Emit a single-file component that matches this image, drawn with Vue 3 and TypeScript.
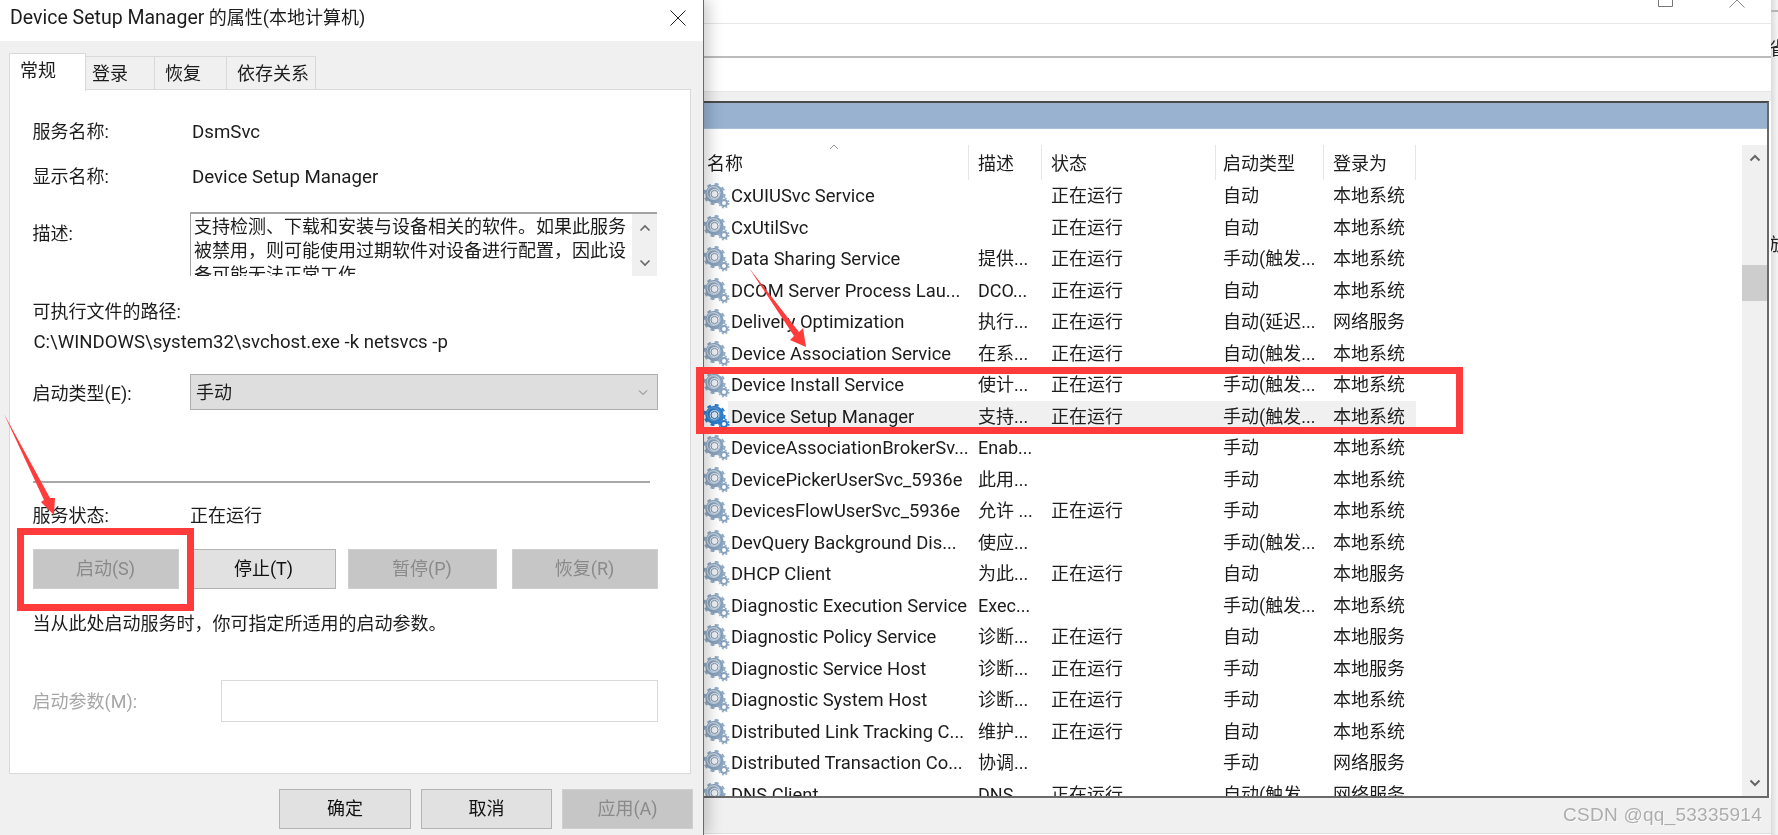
<script setup lang="ts">
interface Service {
  name: string
  desc: string
  state: string
  start: string
  logon: string
  selected?: boolean
}

const RUN = '正在运行'
const SYS = '本地系统'
const LOC = '本地服务'
const NET = '网络服务'

const services: Service[] = [
  { name: 'CxUIUSvc Service', desc: '', state: RUN, start: '自动', logon: SYS },
  { name: 'CxUtilSvc', desc: '', state: RUN, start: '自动', logon: SYS },
  { name: 'Data Sharing Service', desc: '提供...', state: RUN, start: '手动(触发...', logon: SYS },
  { name: 'DCOM Server Process Lau...', desc: 'DCO...', state: RUN, start: '自动', logon: SYS },
  { name: 'Delivery Optimization', desc: '执行...', state: RUN, start: '自动(延迟...', logon: NET },
  { name: 'Device Association Service', desc: '在系...', state: RUN, start: '自动(触发...', logon: SYS },
  { name: 'Device Install Service', desc: '使计...', state: RUN, start: '手动(触发...', logon: SYS },
  { name: 'Device Setup Manager', desc: '支持...', state: RUN, start: '手动(触发...', logon: SYS, selected: true },
  { name: 'DeviceAssociationBrokerSv...', desc: 'Enab...', state: '', start: '手动', logon: SYS },
  { name: 'DevicePickerUserSvc_5936e', desc: '此用...', state: '', start: '手动', logon: SYS },
  { name: 'DevicesFlowUserSvc_5936e', desc: '允许 ...', state: RUN, start: '手动', logon: SYS },
  { name: 'DevQuery Background Dis...', desc: '使应...', state: '', start: '手动(触发...', logon: SYS },
  { name: 'DHCP Client', desc: '为此...', state: RUN, start: '自动', logon: LOC },
  { name: 'Diagnostic Execution Service', desc: 'Exec...', state: '', start: '手动(触发...', logon: SYS },
  { name: 'Diagnostic Policy Service', desc: '诊断...', state: RUN, start: '自动', logon: LOC },
  { name: 'Diagnostic Service Host', desc: '诊断...', state: RUN, start: '手动', logon: LOC },
  { name: 'Diagnostic System Host', desc: '诊断...', state: RUN, start: '手动', logon: SYS },
  { name: 'Distributed Link Tracking C...', desc: '维护...', state: RUN, start: '自动', logon: SYS },
  { name: 'Distributed Transaction Co...', desc: '协调...', state: '', start: '手动', logon: NET },
  { name: 'DNS Client', desc: 'DNS...', state: RUN, start: '自动(触发...', logon: NET }
]

const tabs: string[] = ['登录', '恢复', '依存关系']
</script>

<template>
  <div class="stage">
    <section class="dialog">
      <header class="titlebar">
        <span><span class="title-latin">Device Setup Manager</span> 的属性(本地计算机)</span>
        <svg class="close" width="16" height="16" viewBox="0 0 16 16">
          <path d="M0.5 0.5 15.5 15.5M15.5 0.5 0.5 15.5" stroke="#222" fill="none" />
        </svg>
      </header>

      <nav class="tabs">
        <div class="tab active">常规</div>
        <div v-for="t in tabs" :key="t" class="tab" :class="'tab-' + t.length">{{ t }}</div>
      </nav>

      <div class="panel">
        <div class="row r1"><span class="label">服务名称:</span><span class="value latin">DsmSvc</span></div>
        <div class="row r2"><span class="label">显示名称:</span><span class="value latin">Device Setup Manager</span></div>
        <div class="row desc-row">
          <span class="label desc-label">描述:</span>
          <div class="descbox">
            <div class="desc-text">
              <div>支持检测、下载和安装与设备相关的软件。如果此服务</div>
              <div>被禁用，则可能使用过期软件对设备进行配置，因此设</div>
              <div>备可能无法正常工作。</div>
            </div>
            <div class="desc-scroll">
              <svg width="12" height="8" viewBox="0 0 12 8"><path d="M1.5 6.5 6 2l4.5 4.5" fill="none" stroke="#666" stroke-width="1.6" /></svg>
              <svg width="12" height="8" viewBox="0 0 12 8"><path d="M1.5 1.5 6 6l4.5-4.5" fill="none" stroke="#666" stroke-width="1.6" /></svg>
            </div>
          </div>
        </div>
        <div class="path-label">可执行文件的路径:</div>
        <div class="path-value latin">C:\WINDOWS\system32\svchost.exe -k netsvcs -p</div>
        <div class="row startup">
          <span class="label">启动类型(E):</span>
          <div class="select">
            <span>手动</span>
            <svg width="10" height="7" viewBox="0 0 10 7"><path d="M1 1.5 5 5.5l4-4" fill="none" stroke="#777" /></svg>
          </div>
        </div>
        <div class="separator"></div>
        <div class="row status"><span class="label">服务状态:</span><span>正在运行</span></div>
        <div class="svc-buttons">
          <button class="btn off b1">启动(S)</button>
          <button class="btn b2">停止(T)</button>
          <button class="btn off b3">暂停(P)</button>
          <button class="btn off b4">恢复(R)</button>
        </div>
        <div class="note">当从此处启动服务时，你可指定所适用的启动参数。</div>
        <div class="row params">
          <span class="params-label">启动参数(M):</span>
          <div class="params-input"></div>
        </div>
      </div>

      <footer class="footer">
        <button class="btn foot ok">确定</button>
        <button class="btn foot">取消</button>
        <button class="btn foot off">应用(A)</button>
      </footer>
    </section>

    <section class="window">
      <div class="win-top">
        <svg width="15" height="7" viewBox="0 0 15 7"><path d="M0.5 0V6.5H14.5V0" fill="none" stroke="#777" /></svg>
        <svg class="win-x" width="16" height="8" viewBox="0 0 16 8"><path d="M0.5 7.5 8 0l7.5 7.5" fill="none" stroke="#888" /></svg>
      </div>
      <div class="win-bar"></div>
      <div class="win-bar2"></div>
      <div class="win-band"></div>
      <div class="frame">
        <div class="blue"></div>
        <div class="list-wrap">
          <div class="list">
            <div class="head grid">
              <div class="hc first">
                名称
                <svg class="sort" width="10" height="6" viewBox="0 0 10 6"><path d="M1 5 5 1l4 4" fill="none" stroke="#999" /></svg>
              </div>
              <div class="hc">描述</div>
              <div class="hc">状态</div>
              <div class="hc start-col">启动类型</div>
              <div class="hc">登录为</div>
            </div>
            <div v-for="s in services" :key="s.name" class="svc grid" :class="{ selected: s.selected }">
              <div class="namecell">
                <svg class="gear" width="26" height="26" viewBox="0 0 26 26">
                  <g :class="s.selected ? 'gear-on' : 'gear-off'">
                    <circle class="teeth" cx="10.5" cy="11" r="10" stroke-width="2.2" stroke-dasharray="3.9 3.95" fill="none" />
                    <circle class="ring" cx="10.5" cy="11" r="7" stroke-width="4.4" fill="none" />
                    <circle class="glow" cx="9.5" cy="10" r="6.4" stroke-width="1.2" fill="none" />
                    <circle class="hole" cx="10.5" cy="11" r="3.6" />
                    <circle class="teeth" cx="20" cy="20" r="4.8" stroke-width="1.5" stroke-dasharray="1.9 1.9" fill="none" />
                    <circle class="ring" cx="20" cy="20" r="3" stroke-width="2" fill="none" />
                  </g>
                </svg>
                <span class="svcname">{{ s.name }}</span>
              </div>
              <div class="cell">{{ s.desc }}</div>
              <div class="cell">{{ s.state }}</div>
              <div class="cell start-col">{{ s.start }}</div>
              <div class="cell">{{ s.logon }}</div>
            </div>
          </div>
          <div class="scroll">
            <svg class="sc-up" width="12" height="8" viewBox="0 0 12 8"><path d="M1.5 6.5 6 2l4.5 4.5" fill="none" stroke="#666" stroke-width="2" /></svg>
            <div class="thumb"></div>
            <svg class="sc-down" width="12" height="8" viewBox="0 0 12 8"><path d="M1.5 1.5 6 6l4.5-4.5" fill="none" stroke="#666" stroke-width="2" /></svg>
          </div>
        </div>
      </div>
      <div class="win-status"><span class="watermark">CSDN @qq_53335914</span></div>
    </section>

    <aside class="edge">
      <div class="edge-line"></div>
      <div class="edge-a">省</div>
      <div class="edge-b">放</div>
    </aside>

    <!-- annotations drawn over the screenshot -->
    <div class="mark mark-a"></div>
    <div class="mark mark-b"></div>
    <svg class="arrows" width="1778" height="835" viewBox="0 0 1778 835">
      <polygon points="749,268 799,332 803,328 806,347 790,340 794,336" fill="#ff3b3b" />
      <polygon points="4,414 50,498 55,498 54,515 41,502 44,500" fill="#ff3b3b" />
    </svg>
  </div>
</template>

<style scoped>
.stage {
  position: relative;
  display: flex;
  width: 1778px;
  height: 835px;
  overflow: hidden;
  background: #fff;
  color: #1c1c1c;
  font-family: Roboto, "Noto Sans CJK SC", sans-serif;
  font-size: 18px;
  line-height: 24px;
  filter: blur(0.35px);
}
.latin { font-size: 18.7px; }
.title-latin { font-size: 19.5px; }

/* dialog */
.dialog {
  position: relative;
  z-index: 2;
  flex: none;
  box-sizing: border-box;
  width: 704px;
  height: 835px;
  border-right: 1px solid #6a6a6a;
  background: #f0f0f0;
  box-shadow: 5px 0 14px rgba(0, 0, 0, 0.2);
}
.titlebar {
  display: flex;
  align-items: center;
  justify-content: space-between;
  height: 41px;
  padding: 0 17px 6px 10px;
  box-sizing: border-box;
  background: #fff;
}
.close { flex: none; }
.tabs {
  display: flex;
  align-items: flex-end;
  height: 48px;
  margin: 0 0 0 9px;
}
.tab {
  box-sizing: border-box;
  width: 69px;
  height: 33px;
  padding: 5px 0 0 6px;
  border: 1px solid #d9d9d9;
  border-bottom: 0;
  border-left: 0;
  background: #f0f0f0;
}
.tab-2:nth-child(3) { width: 72px; padding-left: 10px; }
.tab-4 { width: 89px; padding-left: 10px; }
.tab.active {
  position: relative;
  z-index: 1;
  width: 77px;
  height: 38px;
  margin-bottom: -2px;
  padding: 5px 0 0 10px;
  border-left: 1px solid #d9d9d9;
  background: #fff;
}
.panel {
  box-sizing: border-box;
  width: 682px;
  height: 685px;
  margin-left: 9px;
  padding: 30px 32px 0 22.5px;
  border: 1px solid #d9d9d9;
  background: #fff;
}
.row { display: flex; }
.label { flex: none; width: 157.5px; }
.value { margin-left: 2px; }
.r2 { margin-top: 21px; }
.desc-row { margin-top: 23px; }
.desc-label { padding-top: 10px; }
.descbox {
  display: flex;
  box-sizing: border-box;
  width: 467px;
  height: 64px;
  overflow: hidden;
  border-top: 2px solid #a3a3a3;
  border-left: 1px solid #a3a3a3;
}
.desc-text {
  flex: none;
  width: 441px;
  padding: 1px 0 0 3px;
  box-sizing: border-box;
  white-space: nowrap;
}
.desc-scroll {
  flex: 1;
  display: flex;
  flex-direction: column;
  align-items: center;
  justify-content: space-between;
  padding: 10px 0 9px;
  background: #f0f0f0;
}
.path-label { margin-top: 24px; }
.path-value { margin: 6px 0 0 1px; font-size: 18.6px; }
.startup { align-items: center; margin-top: 20px; }
.startup .label { padding-top: 4px; }
.select {
  display: flex;
  align-items: center;
  justify-content: space-between;
  box-sizing: border-box;
  width: 469px;
  height: 36px;
  padding: 1px 9px 0 5px;
  border: 1px solid #adadad;
  background: #dedede;
}
.separator {
  height: 2px;
  width: 617px;
  margin-top: 71px;
  background: #a8a8a8;
}
.status { margin-top: 21px; }
.svc-buttons { display: flex; margin-top: 21px; }
.btn {
  box-sizing: border-box;
  height: 40px;
  padding: 0;
  border: 1px solid #b4b4b4;
  border-radius: 0;
  background: #e1e1e1;
  color: #111;
  font: inherit;
}
.btn.off {
  border-color: #cfcfcf;
  background: #c6c6c6;
  color: #8a8a8a;
}
.b1 { width: 146px; }
.b2 { width: 144px; margin-left: 13px; }
.b3 { width: 149px; margin-left: 12px; }
.b4 { width: 146px; margin-left: 15px; }
.note { margin-top: 23px; }
.params { align-items: center; margin-top: 44px; }
.params-label { flex: none; width: 188px; padding-top: 2px; color: #a6a6a6; }
.params-input {
  box-sizing: border-box;
  width: 437px;
  height: 42px;
  border: 1px solid #d9d9d9;
  background: #fff;
}
.footer {
  display: flex;
  justify-content: flex-end;
  gap: 10px;
  padding: 15px 10px 0 0;
}
.foot { width: 131px; }
.foot.ok { width: 132px; }

/* services window */
.window {
  flex: none;
  display: flex;
  flex-direction: column;
  width: 1067px;
  height: 835px;
}
.win-top {
  display: flex;
  align-items: flex-start;
  justify-content: flex-end;
  box-sizing: border-box;
  height: 24px;
  padding-right: 26px;
  border-bottom: 1px solid #e6e6e6;
}
.win-x { margin-left: 56px; }
.win-bar {
  box-sizing: border-box;
  height: 34px;
  border-bottom: 2px solid #bcbcbc;
}
.win-bar2 { height: 33px; }
.win-band {
  box-sizing: border-box;
  height: 10px;
  border-top: 1px solid #e6e6e6;
  background: #f0f0f0;
}
.frame {
  box-sizing: border-box;
  height: 697px;
  overflow: hidden;
  border-top: 2px solid #4a4a4a;
  border-right: 2px solid #6a6a6a;
  border-bottom: 2px solid #6a6a6a;
  margin-right: 2px;
}
.blue { height: 26px; background: #98b2d0; border-bottom: 1px solid #a9c0d9; box-sizing: border-box; }
.list-wrap { display: flex; height: 667px; }
.list { flex: 1; overflow: hidden; }
.grid {
  display: grid;
  grid-template-columns: 265px 73px 174px 108px 92px;
  width: 712px;
}
.head { height: 51px; padding-top: 16px; box-sizing: border-box; }
.hc {
  position: relative;
  padding-left: 9px;
  border-right: 1px solid #e6e6e6;
  line-height: 38px;
  box-sizing: border-box;
  height: 35px;
}
.hc.first { padding-left: 3px; }
.hc.start-col { padding-left: 7px; }
.sort { position: absolute; left: 125px; top: -1px; }
.svc { height: 31.5px; line-height: 31.5px; white-space: nowrap; }
.svc.selected {
  background: linear-gradient(#f0f0f0, #f0f0f0) 24px 0 / 688px 100% no-repeat;
}
.namecell { display: flex; align-items: center; overflow: hidden; }
.gear { flex: none; margin-top: 1px; }
.svcname { margin-left: 1px; font-size: 18.4px; }
.cell { padding-left: 9px; overflow: hidden; }
.cell.start-col { padding-left: 7px; }
.gear-off .ring { stroke: #89a3be; }
.gear-off .teeth { stroke: #94adc6; }
.gear-off .glow { stroke: #c4d2e0; }
.gear-off .hole { fill: #eef2f6; stroke: #6f8ca8; }
.gear-on .ring { stroke: #2f7cc8; }
.gear-on .teeth { stroke: #2f7cc8; }
.gear-on .glow { stroke: #5b9ad8; }
.gear-on .hole { fill: #dcebf8; stroke: #1c5f9f; }
.scroll {
  flex: none;
  display: flex;
  flex-direction: column;
  align-items: center;
  width: 25px;
  margin-top: 16px;
  padding-top: 9px;
  box-sizing: border-box;
  background: #f0f0f0;
}
.thumb {
  align-self: stretch;
  height: 36px;
  margin-top: 103px;
  background: #cdcdcd;
}
.sc-down { margin-top: auto; margin-bottom: 9px; }
.win-status {
  flex: 1;
  display: flex;
  align-items: center;
  justify-content: flex-end;
  box-sizing: border-box;
  padding: 0 9px 1px 0;
  border-bottom: 1px solid #dedede;
  margin-bottom: 1px;
  background: #f0f0f0;
}
.watermark {
  color: #adadad;
  font-family: "Liberation Sans", sans-serif;
  font-size: 19px;
  letter-spacing: 0.25px;
  text-shadow: 1px 1px 0 rgba(255, 255, 255, 0.7);
}

.edge {
  flex: 1;
  overflow: hidden;
  background: linear-gradient(90deg, #dcdcdc, #f6f6f6);
}
.edge-line { height: 2px; margin-top: 10px; background: #b5b5b5; }
.edge-a { margin: 25px 0 0 -2px; color: #222; white-space: nowrap; }
.edge-b { margin: 172px 0 0 -2px; color: #222; white-space: nowrap; }

/* annotations */
.mark {
  position: absolute;
  z-index: 3;
  box-sizing: border-box;
  border: 7px solid #ff3b3b;
}
.mark-a { left: 17px; top: 528px; width: 177px; height: 83px; }
.mark-b { left: 696px; top: 367px; width: 767px; height: 67px; }
.arrows { position: absolute; left: 0; top: 0; z-index: 4; }
</style>
